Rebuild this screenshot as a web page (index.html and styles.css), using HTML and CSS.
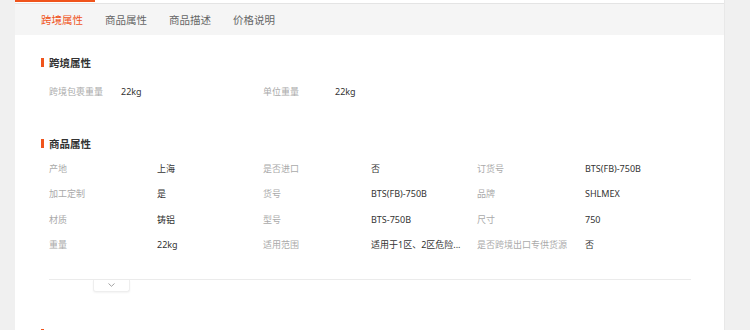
FILE: index.html
```html
<!DOCTYPE html>
<html lang="zh-CN">
<head>
<meta charset="utf-8">
<link rel="stylesheet" href="styles.css">
</head>
<body>
<div class="card">
  <div class="ink-row"><div class="ink"></div></div>
  <div class="tabs">
    <span class="tab active">跨境属性</span>
    <span class="tab">商品属性</span>
    <span class="tab">商品描述</span>
    <span class="tab">价格说明</span>
  </div>

  <section class="sec sec-1">
    <h3 class="sec-title"><i class="mark"></i>跨境属性</h3>
    <div class="grid grid-narrow">
      <div class="cell"><span class="lbl">跨境包裹重量</span><span class="val">22kg</span></div>
      <div class="cell"><span class="lbl">单位重量</span><span class="val">22kg</span></div>
    </div>
  </section>

  <section class="sec sec-2">
    <h3 class="sec-title"><i class="mark"></i>商品属性</h3>
    <div class="grid">
      <div class="cell"><span class="lbl">产地</span><span class="val">上海</span></div>
      <div class="cell"><span class="lbl">是否进口</span><span class="val">否</span></div>
      <div class="cell"><span class="lbl">订货号</span><span class="val">BTS(FB)-750B</span></div>
      <div class="cell"><span class="lbl">加工定制</span><span class="val">是</span></div>
      <div class="cell"><span class="lbl">货号</span><span class="val">BTS(FB)-750B</span></div>
      <div class="cell"><span class="lbl">品牌</span><span class="val">SHLMEX</span></div>
      <div class="cell"><span class="lbl">材质</span><span class="val">铸铝</span></div>
      <div class="cell"><span class="lbl">型号</span><span class="val">BTS-750B</span></div>
      <div class="cell"><span class="lbl">尺寸</span><span class="val">750</span></div>
      <div class="cell"><span class="lbl">重量</span><span class="val">22kg</span></div>
      <div class="cell"><span class="lbl">适用范围</span><span class="val">适用于1区、2区危险...</span></div>
      <div class="cell"><span class="lbl">是否跨境出口专供货源</span><span class="val">否</span></div>
    </div>
    <div class="more">
      <button class="toggle" type="button">
        <svg width="7" height="4" viewBox="0 0 7 4"><path d="M0.5 0.5 L3.5 3.3 L6.5 0.5" fill="none" stroke="#999" stroke-width="0.9"/></svg>
      </button>
    </div>
  </section>

  <section class="sec sec-3">
    <div class="sec-title"><i class="mark"></i></div>
  </section>
</div>
</body>
</html>
```
FILE: styles.css
```css
html, body {
  margin: 0;
  padding: 0;
  background: #f0f0f0;
  height: 330px;
  overflow: hidden;
}
body {
  font-family: "Noto Sans", "Noto Sans CJK SC", sans-serif;
  color: #333;
}
.card {
  margin-left: 15px;
  width: 709px;
  height: 330px;
  background: #fff;
  border-right: 1px solid #e8e8e8;
}
.ink-row {
  height: 3px;
  background: #fff;
}
.ink {
  width: 80px;
  height: 2px;
  background: #f0541c;
}
.tabs {
  display: flex;
  height: 31px;
  border-top: 1px solid #e4e4e4;
  background: #f5f5f5;
  padding-left: 26px;
  gap: 22px;
}
.tab {
  font-size: 10.5px;
  line-height: 31px;
  color: #666;
  font-family: "Noto Sans CJK SC", sans-serif;
}
.tab.active {
  color: #f0541c;
}
.sec {
  padding: 0 33px 0 26px;
}
.sec-title {
  margin: 0;
  display: flex;
  align-items: center;
  gap: 5px;
  height: 14px;
  font-size: 10.5px;
  font-weight: bold;
  color: #333;
  font-family: "Noto Sans CJK SC", sans-serif;
}
.mark {
  display: block;
  width: 3px;
  height: 9px;
  background: #f0541c;
}
.sec-1 { padding-top: 20px; }
.sec-1 .grid { margin-top: 10px; }
.sec-2 { padding-top: 32px; }
.sec-2 .grid { margin-top: 5px; }
.sec-3 { padding-top: 35px; }
.grid {
  display: grid;
  grid-template-columns: repeat(3, 1fr);
  padding-left: 8px;
}
.cell {
  display: flex;
  height: 25.5px;
  align-items: center;
  font-size: 9px;
  white-space: nowrap;
}
.lbl {
  width: 108px;
  flex: none;
  color: #aaa;
}
.grid-narrow .lbl { width: 72px; }
.val {
  color: #333;
}
.more {
  margin: 21px 0 0 8px;
  border-top: 1px solid #ebebeb;
}
.toggle {
  display: flex;
  align-items: center;
  justify-content: center;
  margin-left: 44px;
  width: 37px;
  height: 12px;
  padding: 0;
  background: #fff;
  border: 1px solid #eee;
  border-top: none;
  border-radius: 0 0 3px 3px;
  box-shadow: 0 1px 2px rgba(0,0,0,0.05);
}
```
